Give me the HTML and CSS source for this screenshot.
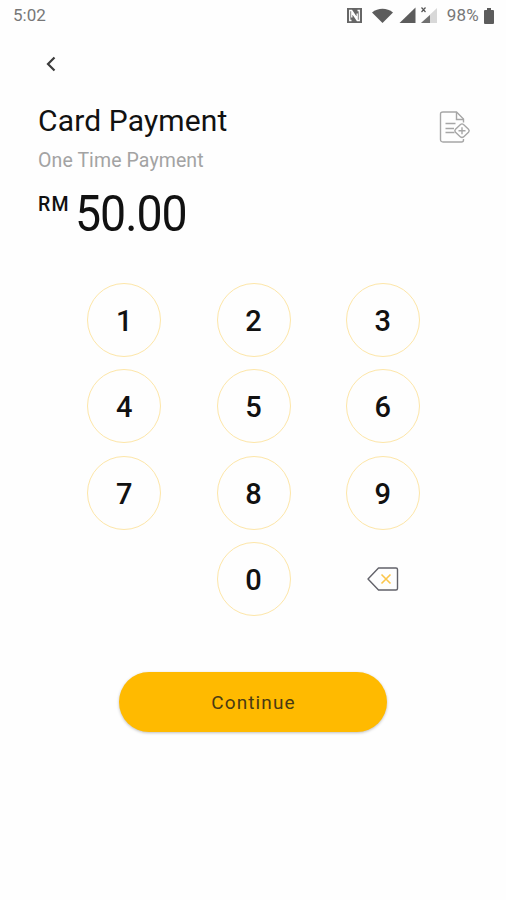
FILE: index.html
```html
<!DOCTYPE html>
<html lang="en">
<head>
  <meta charset="UTF-8">
  <title>Card Payment</title>
  <meta name="viewport" content="width=device-width, initial-scale=1.0">
  <link rel="stylesheet" href="styles.css">
</head>
<body>
  <!-- status bar -->
  <div class="status-bar">
    <span class="time">5:02</span>
    <svg class="status-icons" width="92" height="20" viewBox="0 0 92 20">
      <path fill="#666" d="M1 2h15v15H1z"/>
      <path fill="none" stroke="#fff" stroke-width="1.300" d="M5.500 14.500H3.700V4.500h2l5.500 8V7.500M11.500 4.500h1.800v10h-2l-5.500-8v5"/>
      <path fill="#5c5c5c" d="M26 6.500C32 1.500 41 1.500 47 6.500L36.500 17z"/>
      <path fill="#5c5c5c" d="M69.500 1.500V17H53.500z"/>
      <path fill="#d8d8d8" d="M91 2V17H75z"/>
      <path fill="#707070" d="M84 9V17H75z"/>
      <path fill="none" stroke="#555" stroke-width="1.200" d="M75.500 1.500l4 4.500M79.500 1.500l-4 4.500"/>
    </svg>
    <span class="percent">98%</span>
    <svg class="battery" width="10" height="16" viewBox="0 0 10 16">
      <path fill="#5c5c5c" d="M3 0h4v2h2q1 0 1 1v12q0 1-1 1H1q-1 0-1-1V3q0-1 1-1h2z"/>
    </svg>
  </div>

  <div class="nav">
    <button class="back" aria-label="Back">
      <svg width="10" height="16" viewBox="0 0 10 16">
        <path fill="none" stroke="#3c3c3c" stroke-width="2.200" d="M8.500 1.500L2 8l6.500 6.500"/>
      </svg>
    </button>
  </div>

  <!-- title and amount -->
  <div class="header">
    <div class="header-text">
      <h1>Card Payment</h1>
      <p class="subtitle">One Time Payment</p>
      <div class="amount">
        <span class="currency">RM</span>
        <span class="value">50.00</span>
      </div>
    </div>
    <button class="note" aria-label="Add note">
      <svg width="32" height="34" viewBox="0 0 32 34" fill="none" stroke="#a6a6a6" stroke-width="1.400">
        <path d="M24.500 29V30q0 2-2 2H4q-2.500 0-2.500-2.500V4Q1.500 2 4 2h13.500l7 7v3.500"/>
        <path d="M17.500 2v7.500h7M6.500 13.500h10M6.500 18.500h8.500M6.500 22.500h9"/>
        <path d="M21.500 14.500q1.500-1.200 3 0l5 4.700q1.400 1.500 0 3l-5 4.700q-1.500 1.200-3 0l-5-4.700q-1.400-1.500 0-3z"/>
        <path d="M23 17.200v7M19.500 20.700h7"/>
      </svg>
    </button>
  </div>

  <!-- keypad -->
  <div class="keypad">
    <button class="key">1</button>
    <button class="key">2</button>
    <button class="key">3</button>
    <button class="key">4</button>
    <button class="key">5</button>
    <button class="key">6</button>
    <button class="key">7</button>
    <button class="key">8</button>
    <button class="key">9</button>
    <button class="key zero">0</button>
    <button class="key delete" aria-label="Delete">
      <svg width="32" height="24" viewBox="0 0 32 24" fill="none">
        <path stroke="#62626a" stroke-width="1.400" stroke-linejoin="round" d="M11.500 1H29q1.500 0 1.500 1.500v19q0 1.500-1.500 1.500H11.500L1 12z"/>
        <path stroke="#fbc64b" stroke-width="1.600" d="M14.500 7.500l9 9M23.500 7.500l-9 9"/>
      </svg>
    </button>
  </div>

  <button class="continue">Continue</button>
</body>
</html>
```

FILE: styles.css
```css
* { box-sizing: border-box; margin: 0; padding: 0; }
body {
  font-family: Roboto, 'Noto Sans', sans-serif;
  background: #fefefe;
  min-height: 100vh;
  color: #111;
  display: flex;
  flex-direction: column;
}
button {
  font-family: inherit;
  border: none;
  background: none;
  cursor: pointer;
}
svg {
  display: block;
}
.status-bar {
  display: flex;
  align-items: center;
  height: 31px;
  padding: 0 12px 0 13px;
  font-size: 17px;
  line-height: 20px;
  color: #777;
}
.time, .percent {
  padding-bottom: 1px;
}
.status-icons {
  margin-left: auto;
}
.percent {
  margin: 0 5px 0 9px;
  letter-spacing: 0.2px;
}
.nav {
  height: 73px;
  padding: 25px 0 0 46px;
}
.header {
  display: flex;
  justify-content: space-between;
  padding: 0 35px 0 38px;
  height: 179px;
}
h1 {
  font-size: 30px;
  font-weight: 400;
  line-height: 34px;
  letter-spacing: 0.15px;
}
.subtitle {
  margin-top: 11px;
  font-size: 19.5px;
  line-height: 24px;
  letter-spacing: 0.1px;
  color: #a3a3a3;
}
.amount {
  display: flex;
  margin-top: 12px;
}
.currency {
  width: 37px;
  padding-top: 8px;
  font-size: 19.5px;
  font-weight: 500;
  line-height: 24px;
  letter-spacing: 1.2px;
}
.value {
  font-size: 50px;
  line-height: 58px;
  letter-spacing: -1.1px;
  transform: scaleX(0.93);
  transform-origin: left;
}
.note {
  height: 34px;
  margin-top: 6px;
}
.keypad {
  display: grid;
  grid-template-columns: repeat(3, 74px);
  grid-auto-rows: 74px;
  gap: 12.3px 55.2px;
  justify-content: center;
  padding-left: 1px;
}
.key {
  display: flex;
  align-items: center;
  justify-content: center;
  border: 1.500px solid #fde6a8;
  border-radius: 50%;
  font-size: 29px;
  font-weight: 500;
  line-height: 34px;
  padding-top: 2px;
  color: #111;
}
.zero {
  grid-column: 2;
}
.delete {
  border: none;
  padding-top: 0;
}
.continue {
  width: 268px;
  height: 60px;
  margin: 56px auto 0;
  border-radius: 30px;
  background: #ffba00;
  box-shadow: 0 1px 3px rgba(0, 0, 0, 0.25);
  font-size: 19px;
  padding: 2px 0 0 1px;
  letter-spacing: 1.1px;
  color: #493a13;
}
```
